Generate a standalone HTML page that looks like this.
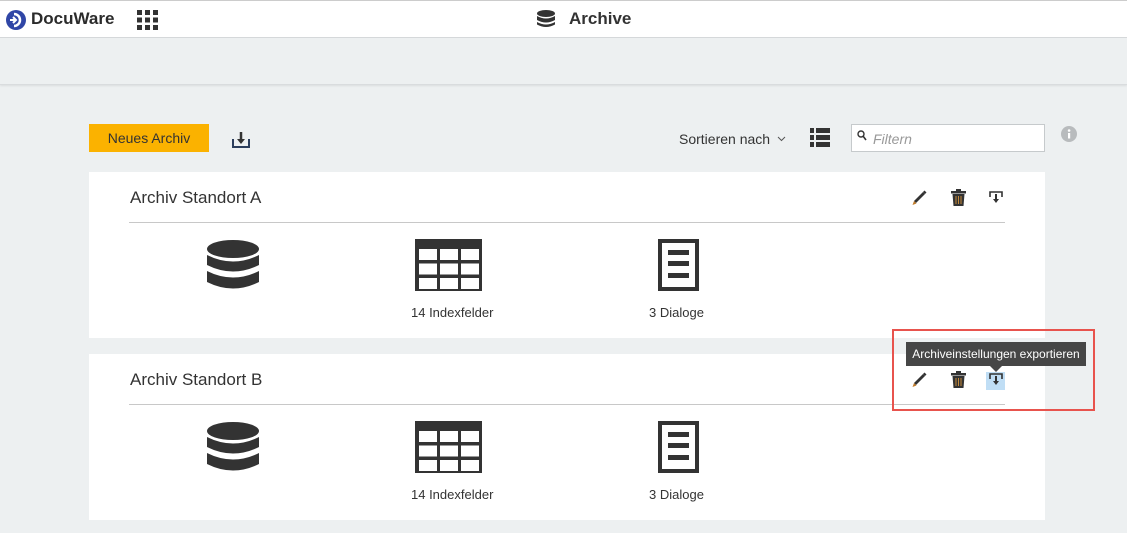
<!DOCTYPE html>
<html><head><meta charset="utf-8"><style>
*{margin:0;padding:0;box-sizing:border-box}
body{width:1127px;height:533px;overflow:hidden;background:#edf0f1;font-family:"Liberation Sans",sans-serif;color:#333;position:relative}
.abs{position:absolute}
.hdr{left:0;top:0;width:1127px;height:38px;background:#fff;border-top:1px solid #ccc;border-bottom:1px solid #d6d9db}
.band{left:0;top:38px;width:1127px;height:47px;background:#edf0f1;border-bottom:1px solid #d9dcde;box-shadow:0 1px 2px rgba(0,0,0,.08)}
.card{left:89px;width:956px;height:166px;background:#fff}
.card .t{position:absolute;left:41px;top:16px;font-size:17px;color:#333}
.card .ln{position:absolute;left:40px;top:50px;width:876px;height:1px;background:#c8c8c8}
.lbl{position:absolute;font-size:13px;color:#333}
</style></head><body>
<div class="abs hdr"></div>
<svg class="abs" style="left:5px;top:9px" width="22" height="22" viewBox="0 0 22 22"><circle cx="11" cy="11" r="10" fill="#3046a6"/><path d="M9 5a6 6 0 1 1 0 12" stroke="#fff" stroke-width="2.5" fill="none"/><path d="M5 11h5M8 8l3 3-3 3" stroke="#fff" stroke-width="2" fill="none"/></svg>
<div class="abs" style="left:31px;top:9px;font-size:17px;font-weight:bold;color:#2b2b2b">DocuWare</div>
<svg class="abs" style="left:137px;top:10px" width="21" height="20"><g fill="#333"><rect x="0" y="0" width="5" height="5"/><rect x="8" y="0" width="5" height="5"/><rect x="16" y="0" width="5" height="5"/><rect x="0" y="7.5" width="5" height="5"/><rect x="8" y="7.5" width="5" height="5"/><rect x="16" y="7.5" width="5" height="5"/><rect x="0" y="15" width="5" height="5"/><rect x="8" y="15" width="5" height="5"/><rect x="16" y="15" width="5" height="5"/></g></svg>
<svg class="abs" style="left:537px;top:10px" width="18" height="18" viewBox="0 0 18 18"><g fill="#333"><ellipse cx="9" cy="3.5" rx="9" ry="3.5"/><path d="M0 6q9 5 18 0v4q-9 5-18 0z"/><path d="M0 12q9 5 18 0v2.5q-9 5-18 0z"/></g></svg>
<div class="abs" style="left:569px;top:9px;font-size:17px;font-weight:bold;color:#333">Archive</div>
<div class="abs band"></div>
<div class="abs" style="left:89px;top:124px;width:120px;height:28px;background:#fbb200;font-size:14px;line-height:28px;text-align:center;color:#333">Neues Archiv</div>
<svg class="abs" style="left:232px;top:131px" width="18" height="17" viewBox="0 0 18 17"><path d="M1 8v8h16V8" stroke="#2c3e5c" stroke-width="2" fill="none"/><path d="M9 1v9" stroke="#333" stroke-width="2.5"/><path d="M5 8l4 5 4-5z" fill="#333"/></svg>
<div class="abs" style="left:679px;top:131px;font-size:14px">Sortieren nach</div>
<svg class="abs" style="left:777px;top:136px" width="9" height="6"><path d="M1 1l3.5 3.5L8 1" stroke="#555" fill="none"/></svg>
<svg class="abs" style="left:810px;top:128px" width="20" height="19"><g fill="#333"><rect x="0" y="0" width="4" height="5"/><rect x="6" y="0" width="14" height="5"/><rect x="0" y="7" width="4" height="5"/><rect x="6" y="7" width="14" height="5"/><rect x="0" y="14" width="4" height="5"/><rect x="6" y="14" width="14" height="5"/></g></svg>
<div class="abs" style="left:851px;top:124px;width:194px;height:28px;background:#fff;border:1px solid #c6cacc"></div>
<svg class="abs" style="left:857px;top:130px" width="10" height="12"><circle cx="4" cy="4" r="3" stroke="#333" stroke-width="1.4" fill="none"/><path d="M6 6l3 4" stroke="#333" stroke-width="1.6"/></svg>
<div class="abs" style="left:873px;top:131px;font-size:14px;font-style:italic;color:#999">Filtern</div>
<svg class="abs" style="left:1061px;top:126px" width="16" height="16"><circle cx="8" cy="8" r="8" fill="#b8bbbd"/><rect x="7" y="7" width="2.2" height="5.5" fill="#fff"/><circle cx="8.1" cy="4.5" r="1.3" fill="#fff"/></svg>

<div class="abs card" style="top:172px"><div class="t">Archiv Standort A</div><div class="ln"></div></div>
<div class="abs card" style="top:354px"><div class="t">Archiv Standort B</div><div class="ln"></div></div>

<div class="abs" style="left:986px;top:372px;width:19px;height:18px;background:#c0def5"></div>
<div class="abs" style="left:906px;top:342px;width:180px;height:24px;background:#464646;color:#fff;font-size:12px;line-height:24px;text-align:center">Archiveinstellungen exportieren</div>
<div class="abs" style="left:990px;top:366px;width:0;height:0;border-left:6px solid transparent;border-right:6px solid transparent;border-top:6px solid #464646"></div>
<div class="abs" style="left:892px;top:329px;width:203px;height:82px;border:2px solid #e8534d"></div>

<script>
const tops=[172,354];
let h='';
for(const t of tops){
const y=t;
h+=`<svg class="abs" style="left:911px;top:${y+17}px" width="17" height="17" viewBox="0 0 17 17"><path d="M3 12L12 3l2 2-9 9z" fill="#333"/><path d="M3 12l-1.5 4 4-1.5z" fill="#c07a28"/><path d="M12 3l1.5-1.5 2 2L14 5z" fill="#333"/></svg>`;
h+=`<svg class="abs" style="left:951px;top:${y+17}px" width="15" height="17" viewBox="0 0 15 17"><rect x="0" y="2" width="15" height="2.5" fill="#333"/><rect x="5" y="0" width="5" height="2" fill="#333"/><path d="M1.5 5h12l-1 12h-10z" fill="#333"/><path d="M5 7v8M7.5 7v8M10 7v8" stroke="#c58a3a" stroke-width="1"/></svg>`;
h+=`<svg class="abs" style="left:989px;top:${y+19}px" width="14" height="14" viewBox="0 0 14 14"><path d="M1 6V1h12v5" stroke="#333" stroke-width="1.6" fill="none"/><path d="M7 3v6" stroke="#333" stroke-width="2"/><path d="M4 8l3 4 3-4z" fill="#333"/></svg>`;
h+=`<svg class="abs" style="left:207px;top:${y+68}px" width="52" height="52" viewBox="0 0 52 52"><g fill="#333"><ellipse cx="26" cy="9" rx="26" ry="9"/><path d="M0 15q26 13 52 0v10q-26 13-52 0z"/><path d="M0 31q26 13 52 0v11q-26 13-52 0z"/></g></svg>`;
h+=`<svg class="abs" style="left:415px;top:${y+67}px" width="67" height="52" viewBox="0 0 67 52"><rect width="67" height="52" fill="#333"/><g fill="#fff">${[0,1,2].map(r=>[0,1,2].map(c=>`<rect x="${4+c*21}" y="${10+r*14.5}" width="18" height="11"/>`).join('')).join('')}</g></svg>`;
h+=`<svg class="abs" style="left:658px;top:${y+67}px" width="41" height="52" viewBox="0 0 41 52"><rect x="2" y="2" width="37" height="48" stroke="#333" stroke-width="4" fill="none"/><rect x="10" y="11" width="21" height="5" fill="#333"/><rect x="10" y="22" width="21" height="5" fill="#333"/><rect x="10" y="34" width="21" height="5" fill="#333"/></svg>`;
h+=`<div class="lbl" style="left:411px;top:${y+133}px">14 Indexfelder</div><div class="lbl" style="left:649px;top:${y+133}px">3 Dialoge</div>`;
}
document.body.insertAdjacentHTML('beforeend',h);
</script>
</body></html>
